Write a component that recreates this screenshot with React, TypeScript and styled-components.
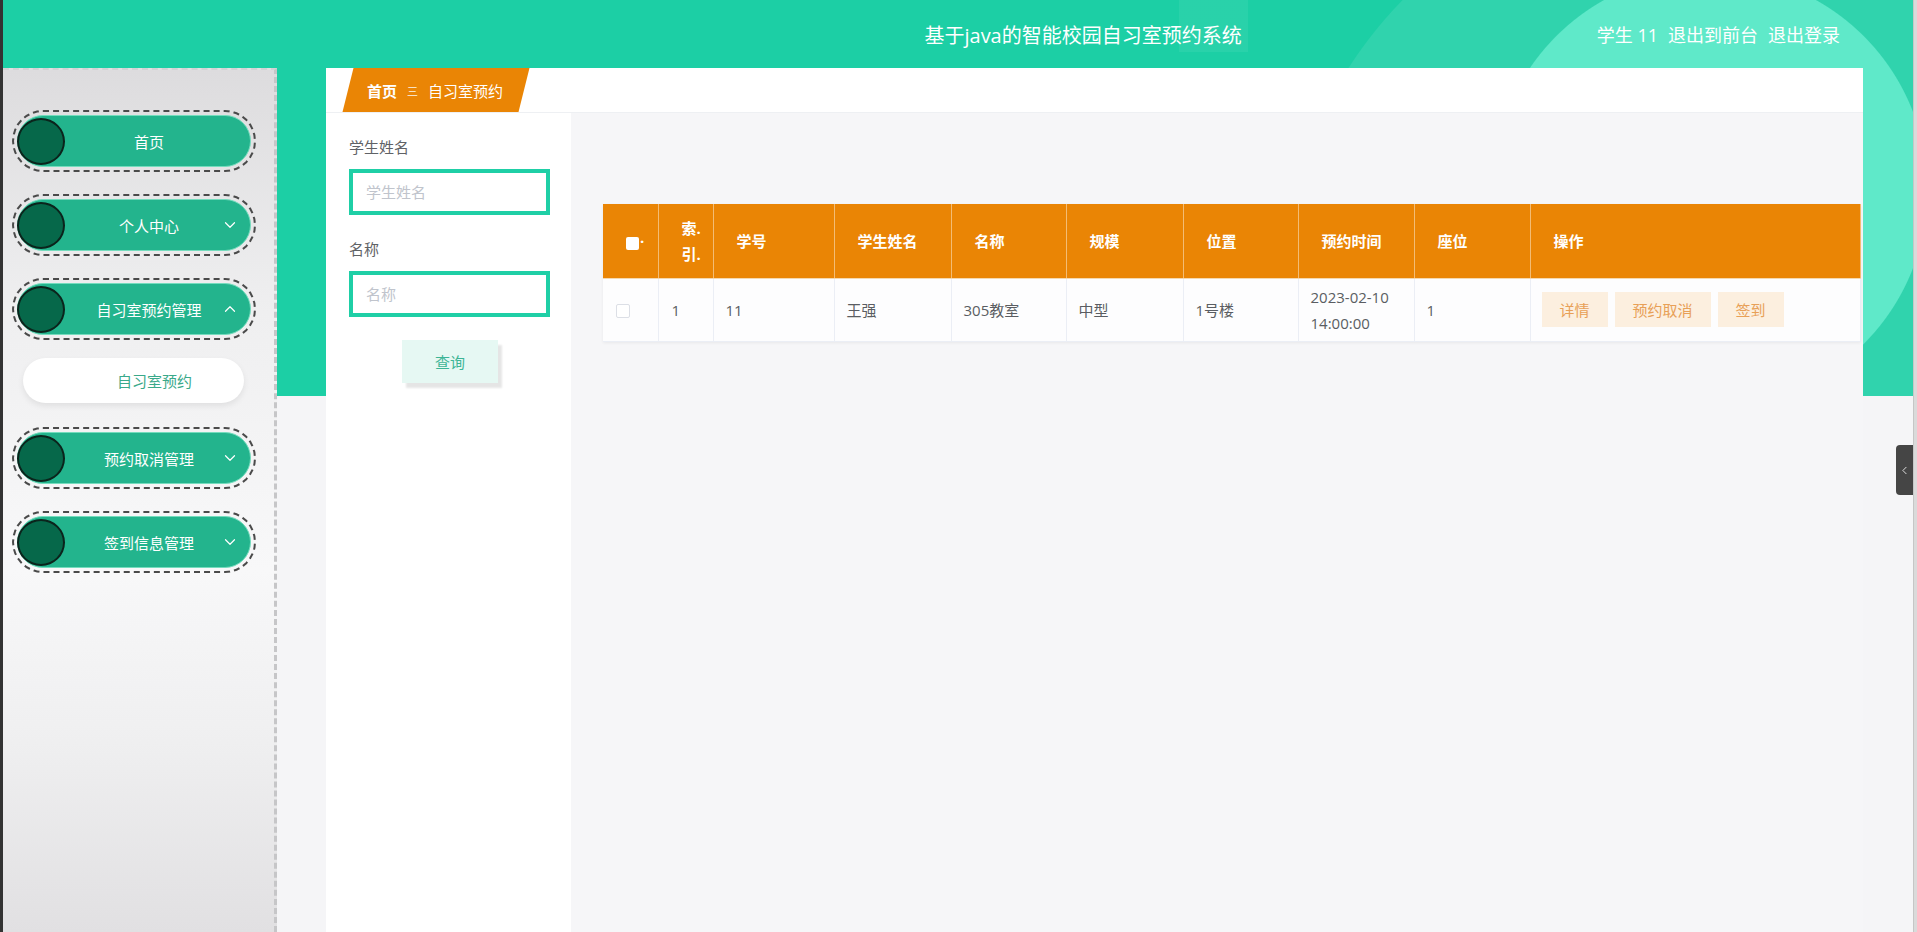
import React from 'react';
import styled, { createGlobalStyle } from 'styled-components';
import { ChevronDown, ChevronUp, ChevronLeft } from 'lucide-react';

const GREEN = '#1ccfa5';
const ORANGE = '#ea8505';

const GlobalStyle = createGlobalStyle`
  html, body {
    margin: 0;
    padding: 0;
    height: 100%;
    overflow: hidden;
  }
  body {
    font-family: "Open Sans", "Noto Sans CJK SC", sans-serif;
  }
  #root {
    height: 100%;
  }
  * {
    box-sizing: border-box;
  }
`;

const Shell = styled.div`
  display: flex;
  height: 100vh;
  border-left: 3px solid #333;
`;

const Page = styled.div`
  flex: 1;
  display: flex;
  flex-direction: column;
  min-width: 0;
  background:
    linear-gradient(rgba(255, 255, 255, 0.06), rgba(255, 255, 255, 0.06)) 1176px 0 / 69px 52px no-repeat,
    radial-gradient(circle at 1707px 190px, #5fe9c9 217px, transparent 218px) 0 0 / 100% 396px no-repeat,
    radial-gradient(circle at 1707px 300px, rgba(255, 255, 255, 0.09) 429px, transparent 430px) 0 0 / 100% 396px no-repeat,
    linear-gradient(${GREEN}, ${GREEN}) 0 0 / 100% 396px no-repeat,
    #f5f5f7;
`;

const Rail = styled.div`
  width: 4px;
  background: #dadada;
  border-left: 1px solid #c6c6c6;
`;

const Header = styled.header`
  height: 68px;
  flex: none;
  display: flex;
  align-items: center;
  justify-content: flex-end;
  padding-right: 73px;
  color: #fff;
`;

const Title = styled.div`
  font-size: 20px;
  margin-right: 355px;
`;

const UserLinks = styled.div`
  display: flex;
  gap: 10px;
  font-size: 18px;
`;

const Body = styled.div`
  flex: 1;
  min-height: 0;
  display: flex;
  padding-right: 50px;
`;

const Sidebar = styled.aside`
  width: 274px;
  flex: none;
  padding: 40px 0 0 9px;
  background: linear-gradient(180deg, #dddcde 0%, #efeff0 28%, #f8f8f9 58%, #efeff0 78%, #e1e0e2 100%);
  border-top: 2px dashed #d3d3d5;
  border-right: 3px dashed #c6c6c8;
`;

const MenuList = styled.div`
  display: flex;
  flex-direction: column;
  gap: 22px;
`;

const ItemRing = styled.div`
  width: 244px;
  height: 62px;
  padding: 3px;
  border: 2px dashed #4a4a4a;
  border-radius: 31px;
`;

const Pill = styled.div`
  height: 100%;
  display: flex;
  align-items: center;
  background: #23b48d;
  border: 1.5px solid #74dcbd;
  border-radius: 27px;
  color: #fff;
`;

const Dot = styled.span`
  width: 48px;
  height: 47px;
  flex: none;
  margin-left: -1px;
  border-radius: 50%;
  background: #06684a;
  border: 2px solid #0b241c;
`;

const ItemLabel = styled.span`
  flex: 1;
  text-align: center;
  padding-left: 18px;
  font-size: 15px;
`;

const Caret = styled.span`
  width: 30px;
  margin-right: 5px;
  display: flex;
  justify-content: center;
`;

const SubItem = styled.div`
  width: 221px;
  height: 45px;
  margin: -4px 0 2px 11px;
  padding-left: 42px;
  display: flex;
  align-items: center;
  justify-content: center;
  background: #fff;
  border-radius: 23px;
  box-shadow: 0 3px 6px rgba(0, 0, 0, 0.08);
  color: #3aa98a;
  font-size: 15px;
`;

const Main = styled.main`
  flex: 1;
  min-width: 0;
  margin-left: 49px;
  display: flex;
  flex-direction: column;
  background: #fff;
`;

const Crumbs = styled.div`
  height: 45px;
  flex: none;
  padding-left: 22px;
  border-bottom: 1px solid #eef0f3;
  background: #fff;
`;

const CrumbTag = styled.div`
  width: 176px;
  height: 100%;
  padding-left: 19px;
  display: flex;
  align-items: center;
  background: ${ORANGE};
  transform: skewX(-14deg);
`;

const CrumbText = styled.div`
  display: flex;
  align-items: center;
  gap: 10px;
  transform: skewX(14deg);
  color: #fff;
  font-size: 15px;
`;

const CrumbHome = styled.b`
  font-weight: 700;
`;

const CrumbSep = styled.span`
  font-size: 11px;
  opacity: 0.9;
`;

const Content = styled.div`
  flex: 1;
  min-height: 0;
  display: flex;
`;

const SearchPanel = styled.div`
  width: 245px;
  flex: none;
  padding: 24px 0 0 23px;
  display: flex;
  flex-direction: column;
  align-items: flex-start;
  background: #fff;
`;

const FieldLabel = styled.label<{ $first?: boolean }>`
  margin-top: ${p => (p.$first ? 0 : 24)}px;
  font-size: 15px;
  line-height: 20px;
  color: #5f6266;
`;

const FieldInput = styled.input`
  width: 201px;
  height: 46px;
  margin-top: 12px;
  padding: 0 0 0 13px;
  border: 4px solid #1fcfa6;
  outline: none;
  font-family: inherit;
  font-size: 15px;
  color: #606266;
  &::placeholder {
    color: #c0c4cc;
  }
`;

const QueryButton = styled.button`
  width: 96px;
  height: 43px;
  margin: 23px 0 0 53px;
  border: none;
  background: #e6f8f3;
  color: #3cb596;
  font-family: inherit;
  font-size: 15px;
  box-shadow: 4px 5px 2px rgba(0, 0, 0, 0.1);
  cursor: pointer;
`;

const TableArea = styled.div`
  flex: 1;
  min-width: 0;
  padding: 91px 2px 0 32px;
  background: #f6f6f8;
`;

const Table = styled.table`
  width: 100%;
  table-layout: fixed;
  border-collapse: collapse;
  box-shadow: 0 1px 3px rgba(0, 0, 0, 0.06);
`;

const Th = styled.th`
  height: 74px;
  padding: 0 0 0 23px;
  background: ${ORANGE};
  color: #fff;
  font-size: 15px;
  font-weight: 700;
  text-align: left;
  line-height: 26px;
  border-right: 1px solid rgba(255, 255, 255, 0.45);
  border-bottom: 1px solid #f5d8b0;
`;

const Td = styled.td<{ $pad?: number }>`
  height: 63px;
  padding: 0 0 0 ${p => p.$pad ?? 12}px;
  background: #fdfdfe;
  color: #5a5d62;
  font-size: 15px;
  line-height: 26px;
  border-right: 1px solid #ebeef5;
  border-bottom: 1px solid #ebeef5;
`;

const HeadCheck = styled.span`
  display: inline-flex;
  align-items: flex-end;
  &::before {
    content: '';
    width: 13px;
    height: 13px;
    border-radius: 2px;
    background: #fff;
    margin-right: 1px;
  }
`;

const RowCheck = styled.span`
  display: inline-block;
  width: 14px;
  height: 14px;
  border: 1px solid #dcdfe6;
  border-radius: 2px;
  background: #fff;
  vertical-align: middle;
`;

const ActionBtn = styled.button`
  height: 35px;
  padding: 0 18px;
  margin-right: 7px;
  border: none;
  background: #fcefdf;
  color: #e8a057;
  font-family: inherit;
  font-size: 15px;
  cursor: pointer;
`;

const SideTab = styled.div`
  position: fixed;
  right: 4px;
  top: 445px;
  width: 17px;
  height: 50px;
  display: flex;
  align-items: center;
  justify-content: center;
  background: #454545;
  border-radius: 4px 0 0 4px;
  color: #fff;
`;

type MenuEntry = { label: string; caret?: 'down' | 'up' };

const MENU: MenuEntry[] = [
  { label: '首页' },
  { label: '个人中心', caret: 'down' },
  { label: '自习室预约管理', caret: 'up' },
];

const MENU_AFTER: MenuEntry[] = [
  { label: '预约取消管理', caret: 'down' },
  { label: '签到信息管理', caret: 'down' },
];

const COLS = [55, 55, 121, 117, 115, 117, 115, 116, 116];

const HEADS = ['学号', '学生姓名', '名称', '规模', '位置', '预约时间', '座位', '操作'];

const MenuItem = ({ item }: { item: MenuEntry }) => (
  <ItemRing>
    <Pill>
      <Dot />
      <ItemLabel>{item.label}</ItemLabel>
      <Caret>
        {item.caret === 'down' && <ChevronDown size={18} strokeWidth={1.6} />}
        {item.caret === 'up' && <ChevronUp size={18} strokeWidth={1.6} />}
      </Caret>
    </Pill>
  </ItemRing>
);

export default function App() {
  return (
    <>
      <GlobalStyle />
      <Shell>
        <Page>
          <Header>
            <Title>基于java的智能校园自习室预约系统</Title>
            <UserLinks>
              <span>学生 11</span>
              <span>退出到前台</span>
              <span>退出登录</span>
            </UserLinks>
          </Header>

          <Body>
            <Sidebar>
              <MenuList>
                {MENU.map(m => (
                  <MenuItem key={m.label} item={m} />
                ))}
                <SubItem>自习室预约</SubItem>
                {MENU_AFTER.map(m => (
                  <MenuItem key={m.label} item={m} />
                ))}
              </MenuList>
            </Sidebar>

            <Main>
              <Crumbs>
                <CrumbTag>
                  <CrumbText>
                    <CrumbHome>首页</CrumbHome>
                    <CrumbSep>三</CrumbSep>
                    <span>自习室预约</span>
                  </CrumbText>
                </CrumbTag>
              </Crumbs>

              <Content>
                <SearchPanel>
                  <FieldLabel $first>学生姓名</FieldLabel>
                  <FieldInput placeholder="学生姓名" />
                  <FieldLabel>名称</FieldLabel>
                  <FieldInput placeholder="名称" />
                  <QueryButton>查询</QueryButton>
                </SearchPanel>

                <TableArea>
                  <Table>
                    <colgroup>
                      {COLS.map((w, i) => (
                        <col key={i} style={{ width: w }} />
                      ))}
                      <col />
                    </colgroup>
                    <thead>
                      <tr>
                        <Th>
                          <HeadCheck>.</HeadCheck>
                        </Th>
                        <Th>
                          索.
                          <br />
                          引.
                        </Th>
                        {HEADS.map(h => (
                          <Th key={h}>{h}</Th>
                        ))}
                      </tr>
                    </thead>
                    <tbody>
                      <tr>
                        <Td $pad={13}>
                          <RowCheck />
                        </Td>
                        <Td $pad={13}>1</Td>
                        <Td>11</Td>
                        <Td>王强</Td>
                        <Td>305教室</Td>
                        <Td>中型</Td>
                        <Td>1号楼</Td>
                        <Td>
                          2023-02-10
                          <br />
                          14:00:00
                        </Td>
                        <Td>1</Td>
                        <Td $pad={11}>
                          <ActionBtn>详情</ActionBtn>
                          <ActionBtn>预约取消</ActionBtn>
                          <ActionBtn>签到</ActionBtn>
                        </Td>
                      </tr>
                    </tbody>
                  </Table>
                </TableArea>
              </Content>
            </Main>
          </Body>
        </Page>
        <Rail />
        <SideTab>
          <ChevronLeft size={13} strokeWidth={1.5} />
        </SideTab>
      </Shell>
    </>
  );
}
